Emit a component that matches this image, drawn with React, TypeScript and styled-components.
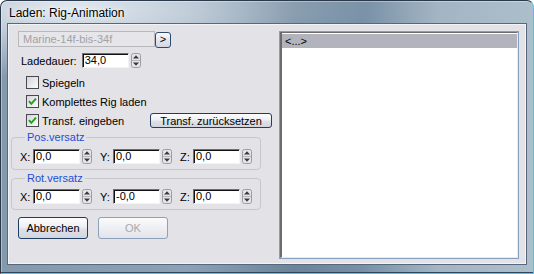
import styled, { createGlobalStyle } from 'styled-components';

const GlobalStyle = createGlobalStyle`
  html, body { margin: 0; padding: 0; background: #fff; }
  body { font-family: "Liberation Sans", Arial, sans-serif; font-size: 11px; color: #000; }
  * { box-sizing: border-box; }
`;

const Window = styled.div`
  width: 534px;
  height: 274px;
  display: flex;
  flex-direction: column;
  padding: 0 7px 9px 7px;
  border: 1px solid #2b3a4b;
  border-right-color: #4fc6ec;
  border-bottom-color: #3ccbf4;
  border-radius: 7px 7px 0 0;
  background:
    radial-gradient(ellipse 300px 70px at 70px 8px, rgba(232, 238, 244, 0.95), rgba(232, 238, 244, 0) 100%),
    linear-gradient(90deg, #8599ad 0%, #8ca1b5 35%, #6b849a 55%, #7890a6 68%, #a3b5c3 82%, #adbecb 100%);
  box-shadow: inset 0 -1px 0 #34465a, inset 1px 1px 0 rgba(255, 255, 255, 0.35);
`;

const TitleBar = styled.div`
  height: 23px;
  line-height: 24px;
  padding-left: 1px;
  font-size: 12px;
  color: #000;
  text-shadow: 0 0 6px rgba(255, 255, 255, 0.9), 0 0 2px rgba(255, 255, 255, 0.8);
`;

const Client = styled.div`
  flex: 1;
  display: flex;
  padding: 6px 6px 4px 0;
  background: #e3e2e7;
  border: 1px solid #f2f3f6;
  box-shadow: 0 0 0 1px #58687c;
`;

const LeftCol = styled.div`
  width: 270px;
  display: flex;
  flex-direction: column;
  padding-left: 2px;
`;

const ComboRow = styled.div`
  display: flex;
  align-items: flex-start;
  height: 17px;
  margin-left: 7px;
`;

const Combo = styled.div`
  width: 137px;
  height: 16px;
  line-height: 14px;
  padding-left: 4px;
  border: 1px solid #b9b9bc;
  background: #e6e5ea;
  color: #a2a2a4;
`;

const SmallButton = styled.div`
  width: 16px;
  height: 16px;
  margin-top: 1px;
  border: 1px solid #2b4b72;
  border-radius: 3px;
  background: linear-gradient(#fbfbfc, #e4e6ec 50%, #d3d7e1);
  font-size: 11px;
  line-height: 13px;
  text-align: center;
`;

const FieldRow = styled.div<{ $top: number; $left: number }>`
  display: flex;
  align-items: center;
  height: 15px;
  margin-top: ${(p) => p.$top}px;
  margin-left: ${(p) => p.$left}px;
`;

const FieldLabel = styled.span<{ $w?: number }>`
  width: ${(p) => (p.$w ? `${p.$w}px` : 'auto')};
  margin-right: ${(p) => (p.$w ? 0 : 5)}px;
  white-space: nowrap;
`;

const Input = styled.div`
  width: 47px;
  height: 15px;
  line-height: 12px;
  padding-left: 2px;
  background: #fff;
  border: 1px solid;
  border-color: #6f6f6f #f4f4f4 #f4f4f4 #6f6f6f;
  box-shadow: inset 1px 1px 0 #111;
`;

const SpinWrap = styled.span`
  display: flex;
  margin-left: 2px;
`;

const Spinner = () => (
  <SpinWrap>
    <svg width="10" height="15" viewBox="0 0 10 15">
      <rect x="0.5" y="0.5" width="9" height="14" rx="2" fill="#e4e4ea" stroke="#9c9ca4" />
      <line x1="1" y1="7.5" x2="9" y2="7.5" stroke="#b4b4ba" />
      <path d="M5 2.2 L8 5.5 H2 Z" fill="#3a3a3a" />
      <path d="M5 12.8 L8 9.5 H2 Z" fill="#3a3a3a" />
    </svg>
  </SpinWrap>
);

const CheckRow = styled.div<{ $top: number }>`
  display: flex;
  align-items: center;
  height: ${(p) => (p.$top === 5 ? 15 : 13)}px;
  margin-top: ${(p) => p.$top}px;
  margin-left: 15px;
  margin-right: 7px;
`;

const Box = styled.span`
  display: flex;
  width: 13px;
  height: 13px;
  margin-right: 3px;
  border: 1px solid #4a4a4e;
  background: linear-gradient(135deg, #d6d6da, #fbfbfc);
`;

const CheckLabel = styled.span`
  white-space: nowrap;
`;

const CheckBox = ({ checked, label }: { checked?: boolean; label: string }) => (
  <>
    <Box>
      {checked && (
        <svg width="11" height="11" viewBox="0 0 11 11">
          <path d="M2 5.2 L4.3 7.8 L9 2.6" fill="none" stroke="#21a121" strokeWidth="2" />
        </svg>
      )}
    </Box>
    <CheckLabel>{label}</CheckLabel>
  </>
);

const Button = styled.button<{ $w: number; $h: number }>`
  width: ${(p) => p.$w}px;
  height: ${(p) => p.$h}px;
  padding: 0;
  font-family: "Liberation Sans", Arial, sans-serif;
  font-size: 11px;
  color: #000;
  border: 1px solid #203d62;
  border-radius: 3px;
  background: linear-gradient(#fdfdfe, #eff0f4 45%, #dfe1e9 55%, #d2d5df);
  &:disabled {
    color: #a8a8ac;
    border-color: #8da1bb;
    background: linear-gradient(#fbfbfc, #eeeff3 50%, #e2e4ea);
  }
`;

const PushRight = styled(Button)`
  margin-left: auto;
`;

const Group = styled.fieldset<{ $top: number }>`
  width: 250px;
  margin: ${(p) => p.$top}px 0 0 0;
  padding: 4px 0 5px 8px;
  border: 1px solid #c6c6cb;
  border-radius: 4px;
  min-width: 0;
  &:first-of-type {
    padding-top: 5px;
  }
`;

const Legend = styled.legend`
  margin-left: 5px;
  padding: 0 2px;
  line-height: 13px;
  font-size: 11px;
  color: #1c4fd4;
`;

const CoordRow = styled.div`
  display: flex;
  align-items: center;
  gap: 8px;
  height: 15px;
`;

const Coord = styled.div`
  display: flex;
  align-items: center;
`;

const ButtonRow = styled.div`
  display: flex;
  gap: 10px;
  margin: 7px 0 0 7px;
`;

const List = styled.div`
  flex: 1;
  display: flex;
  border: 1px solid #84a0bd;
  padding: 0;
  background: #fff;
`;

const ListInner = styled.div`
  flex: 1;
  border-top: 1px solid #6c6c6c;
  border-left: 2px solid #6c6c6c;
  border-right: 1px solid #efecdf;
  border-bottom: 1px solid #efecdf;
  padding-top: 1px;
`;

const ListRow = styled.div<{ $selected?: boolean }>`
  height: 14px;
  line-height: 14px;
  padding-left: 3px;
  background: ${(p) => (p.$selected ? '#b2b3bd' : 'transparent')};
`;

const CoordSet = ({ values }: { values: string[] }) => (
  <CoordRow>
    {['X:', 'Y:', 'Z:'].map((l, i) => (
      <Coord key={l}>
        <FieldLabel $w={13}>{l}</FieldLabel>
        <Input>{values[i]}</Input>
        <Spinner />
      </Coord>
    ))}
  </CoordRow>
);

export default function App() {
  return (
    <>
      <GlobalStyle />
      <Window>
        <TitleBar>Laden: Rig-Animation</TitleBar>
        <Client>
          <LeftCol>
            <ComboRow>
              <Combo>Marine-14f-bis-34f</Combo>
              <SmallButton>&gt;</SmallButton>
            </ComboRow>
            <FieldRow $top={5} $left={10}>
              <FieldLabel>Ladedauer:</FieldLabel>
              <Input>34,0</Input>
              <Spinner />
            </FieldRow>
            <CheckRow $top={8}>
              <CheckBox label="Spiegeln" />
            </CheckRow>
            <CheckRow $top={6}>
              <CheckBox checked label="Komplettes Rig laden" />
            </CheckRow>
            <CheckRow $top={5}>
              <CheckBox checked label="Transf. eingeben" />
              <PushRight $w={122} $h={15}>Transf. zurücksetzen</PushRight>
            </CheckRow>
            <Group $top={3}>
              <Legend>Pos.versatz</Legend>
              <CoordSet values={['0,0', '0,0', '0,0']} />
            </Group>
            <Group $top={2}>
              <Legend>Rot.versatz</Legend>
              <CoordSet values={['0,0', '-0,0', '0,0']} />
            </Group>
            <ButtonRow>
              <Button $w={70} $h={22}>Abbrechen</Button>
              <Button $w={70} $h={22} disabled>OK</Button>
            </ButtonRow>
          </LeftCol>
          <List>
            <ListInner>
              <ListRow $selected>&lt;...&gt;</ListRow>
            </ListInner>
          </List>
        </Client>
      </Window>
    </>
  );
}
